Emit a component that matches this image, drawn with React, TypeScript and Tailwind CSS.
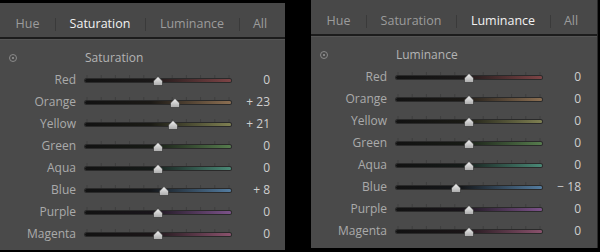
import React from 'react';

interface Row {
  name: string;
  value: number;
  track: string;
}

const tracks: Record<string, string> = {
  Red: 'bg-[linear-gradient(to_right,#121212_0%,#1a1818_45%,#7e4446_100%)]',
  Orange: 'bg-[linear-gradient(to_right,#121212_0%,#1b1916_45%,#8c6f52_100%)]',
  Yellow: 'bg-[linear-gradient(to_right,#121212_0%,#1a1a15_45%,#7f8052_100%)]',
  Green: 'bg-[linear-gradient(to_right,#121212_0%,#171a15_45%,#567c4d_100%)]',
  Aqua: 'bg-[linear-gradient(to_right,#121212_0%,#151a18_45%,#4a8a77_100%)]',
  Blue: 'bg-[linear-gradient(to_right,#121212_0%,#15171a_45%,#537ca0_100%)]',
  Purple: 'bg-[linear-gradient(to_right,#121212_0%,#19151a_45%,#7c528a_100%)]',
  Magenta: 'bg-[linear-gradient(to_right,#121212_0%,#1a1517_45%,#8a526d_100%)]',
};

const names = ['Red', 'Orange', 'Yellow', 'Green', 'Aqua', 'Blue', 'Purple', 'Magenta'];

function makeRows(values: number[]): Row[] {
  return names.map((name, i) => ({ name, value: values[i], track: tracks[name] }));
}

function formatValue(v: number) {
  if (v > 0) return `+ ${v}`;
  if (v < 0) return `\u2212 ${Math.abs(v)}`;
  return '0';
}

function Thumb() {
  return (
    <svg width="10" height="10" viewBox="0 0 10 10">
      <defs>
        <linearGradient id="thumbGrad" x1="0" y1="0" x2="0" y2="1">
          <stop offset="0" stopColor="#f4f4f4" />
          <stop offset="1" stopColor="#a9a9a9" />
        </linearGradient>
      </defs>
      <path d="M5 0.5 L9.5 5 V9.5 H0.5 V5 Z" fill="url(#thumbGrad)" stroke="#2a2a2a" strokeWidth="0.6" />
    </svg>
  );
}

function Slider({ value, track }: { value: number; track: string }) {
  const pos = 73 + (value / 100) * 73;
  return (
    <div className="relative w-[146px] h-[14px]">
      <svg className="absolute left-0 top-[2px]" width="146" height="4">
        {Array.from({ length: 11 }).map((_, i) => (
          <line key={i} x1={2 + i * 14.2} y1="0" x2={2 + i * 14.2} y2="3" stroke="#3e3e3e" strokeWidth="1" />
        ))}
      </svg>
      <div className={`absolute left-0 right-0 top-[6px] h-[3px] rounded-full ring-1 ring-[#2a2a2a] ${track}`} />
      <div className="absolute top-[3px]" style={{ left: pos - 5 }}>
        <Thumb />
      </div>
    </div>
  );
}

function Panel({ title, active, rows, className }: { title: string; active: string; rows: Row[]; className: string }) {
  const tabs = [
    { label: 'Hue', w: 'w-[55px]' },
    { label: 'Saturation', w: 'w-[90px]' },
    { label: 'Luminance', w: 'w-[94px]' },
    { label: 'All', w: 'w-[42px]' },
  ];
  return (
    <div className={`flex flex-col bg-[#4a4a4a] ${className}`}>
      <div className="flex items-center h-[36px] pt-[9px] bg-[#484848] border-b-2 border-[#1c1c1c]">
        {tabs.map((t, i) => (
          <div key={t.label} className={`relative flex items-center justify-center h-[14px] ${t.w}`}>
            {i > 0 && <div className="absolute left-0 top-0 h-[13px] w-px bg-[#3a3a3a]" />}
            <span
              className={
                t.label === active
                  ? 'text-[12.5px] leading-none text-[#f2f2f2]'
                  : 'text-[12.5px] leading-none text-[#9c9c9c]'
              }
            >
              {t.label}
            </span>
          </div>
        ))}
      </div>
      <div className="flex flex-col pt-[7px] border-t border-[#555]">
        <div className="flex items-center h-[22px]">
          <div className="w-[85px] pl-[9px]">
            <div className="flex items-center justify-center w-[8px] h-[8px] rounded-full border border-[#8a8a8a]">
              <div className="w-[2px] h-[2px] rounded-full bg-[#9a9a9a]" />
            </div>
          </div>
          <span className="text-[12px] text-[#b4b4b4]">{title}</span>
        </div>
        {rows.map((r) => (
          <div key={r.name} className="flex items-center h-[22px]">
            <span className="w-[76px] text-right text-[12px] text-[#aaaaaa]">{r.name}</span>
            <div className="ml-[9px]">
              <Slider value={r.value} track={r.track} />
            </div>
            <span className="w-[39px] text-right text-[12px] text-[#cfcfcf]">{formatValue(r.value)}</span>
          </div>
        ))}
      </div>
    </div>
  );
}

export default function App() {
  return (
    <div className="w-[600px] h-[252px] bg-black flex overflow-hidden font-['Open_Sans',sans-serif]">
      <Panel
        title="Saturation"
        active="Saturation"
        rows={makeRows([0, 23, 21, 0, 0, 8, 0, 0])}
        className="w-[285px] h-[247px] mt-[3px]"
      />
      <Panel
        title="Luminance"
        active="Luminance"
        rows={makeRows([0, 0, 0, 0, 0, -18, 0, 0])}
        className="w-[287px] h-[248px] ml-[26px] mt-0 border-r border-[#2a2a2a]"
      />
    </div>
  );
}
